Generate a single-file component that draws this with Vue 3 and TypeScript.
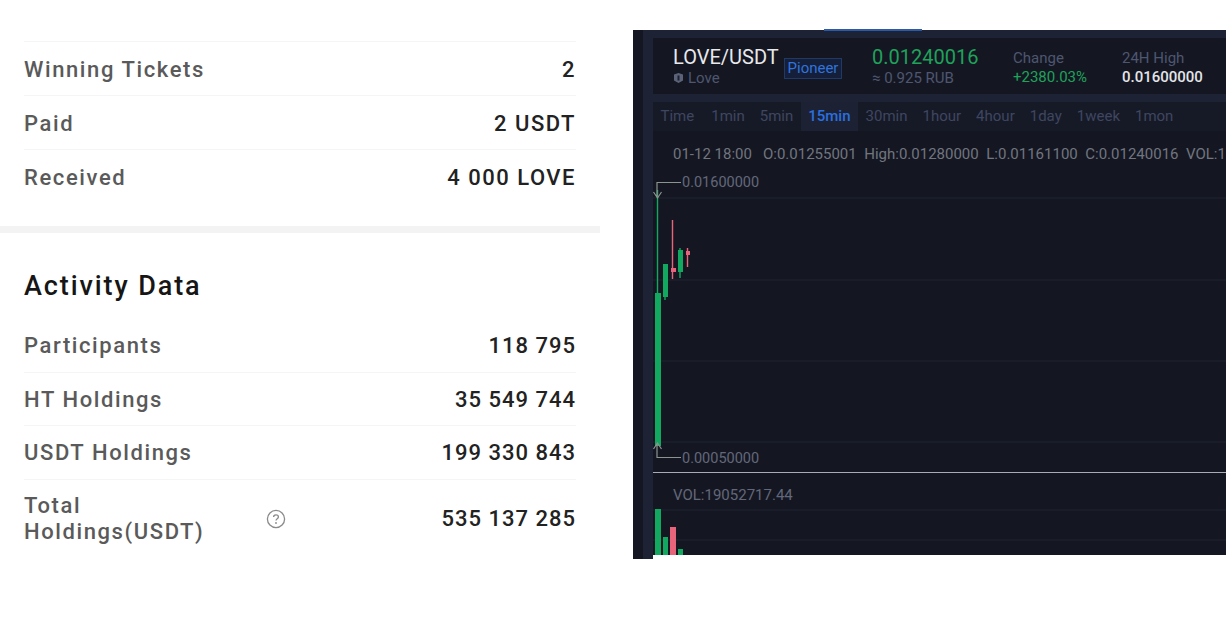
<script setup lang="ts">
interface Row {
  label: string;
  value: string;
}

interface Candle {
  x: number;
  width: number;
  top: number;
  bottom: number;
  wickX: number;
  wickTop: number;
  wickBottom: number;
  color: string;
}

const green = '#12a85f';
const red = '#e8647a';

const ticketRows: Row[] = [
  { label: 'Winning Tickets', value: '2' },
  { label: 'Paid', value: '2 USDT' },
  { label: 'Received', value: '4 000 LOVE' },
];

const activityRows: Row[] = [
  { label: 'Participants', value: '118 795' },
  { label: 'HT Holdings', value: '35 549 744' },
  { label: 'USDT Holdings', value: '199 330 843' },
];

const periods = ['Time', '1min', '5min', '15min', '30min', '1hour', '4hour', '1day', '1week', '1mon'];
const ohlc = ['01-12 18:00', 'O:0.01255001', 'High:0.01280000', 'L:0.01161100', 'C:0.01240016', 'VOL:19052717.44'];
const gridLines = [198, 280, 361, 442, 510, 540];

const candles: Candle[] = [
  { x: 655, width: 6, top: 293, bottom: 446, wickX: 657.5, wickTop: 190, wickBottom: 446, color: green },
  { x: 663, width: 5, top: 264, bottom: 297, wickX: 665, wickTop: 264, wickBottom: 300, color: green },
  { x: 671, width: 5, top: 268, bottom: 272, wickX: 672.5, wickTop: 220, wickBottom: 279, color: red },
  { x: 678, width: 5, top: 250, bottom: 272, wickX: 680, wickTop: 248, wickBottom: 278, color: green },
  { x: 686, width: 4, top: 251, bottom: 255, wickX: 687.5, wickTop: 248, wickBottom: 267, color: red },
];

const volumes = [
  { x: 655, width: 6, top: 509, color: green },
  { x: 663, width: 5, top: 537, color: green },
  { x: 670, width: 6, top: 527, color: red },
  { x: 678, width: 5, top: 549, color: green },
];
</script>

<template>
  <div class="page">
    <section class="details">
      <div class="rows tickets">
        <div v-for="row in ticketRows" :key="row.label" class="row">
          <span class="label">{{ row.label }}</span>
          <span class="value">{{ row.value }}</span>
        </div>
      </div>
      <div class="divider"></div>
      <h2 class="title">Activity Data</h2>
      <div class="rows activity">
        <div v-for="row in activityRows" :key="row.label" class="row">
          <span class="label">{{ row.label }}</span>
          <span class="value">{{ row.value }}</span>
        </div>
        <div class="row total">
          <span class="label total-label">Total Holdings(USDT)</span>
          <svg class="help" width="20" height="20" viewBox="0 0 20 20" fill="none">
            <circle cx="10" cy="10" r="8.6" stroke="#8a8a8a" stroke-width="1.3" />
            <path d="M7.6 8c0-1.4 1-2.2 2.4-2.2s2.4.9 2.4 2.1c0 1.8-2.4 1.8-2.4 3.7" stroke="#8a8a8a" stroke-width="1.3" />
            <circle cx="10" cy="14" r=".9" fill="#8a8a8a" />
          </svg>
          <span class="value">535 137 285</span>
        </div>
      </div>
    </section>

    <section class="terminal">
      <div class="top-mark"></div>
      <div class="terminal-body">
        <div class="rail"></div>
        <div class="main">
          <header class="ticker">
            <div class="pair">
              <div class="pair-name">LOVE/USDT</div>
              <div class="pair-sub">
                <svg width="11" height="12" viewBox="0 0 11 12">
                  <path d="M1 2.5 5.5 1 10 2.5v6L5.5 11 1 8.500z" fill="#5c6378" />
                  <path d="M4.500 3.500h2v5h-2z" fill="#1c2030" />
                </svg>
                <span>Love</span>
              </div>
            </div>
            <span class="badge">Pioneer</span>
            <div class="price">
              <div class="price-main">0.01240016</div>
              <div class="muted">≈ 0.925 RUB</div>
            </div>
            <div class="stat change">
              <div class="muted">Change</div>
              <div class="up">+2380.03%</div>
            </div>
            <div class="stat high">
              <div class="muted">24H High</div>
              <div class="bright">0.01600000</div>
            </div>
          </header>
          <div class="band"></div>
          <nav class="periods">
            <span v-for="period in periods" :key="period" class="period" :class="{ active: period === '15min' }">
              {{ period }}
            </span>
          </nav>
          <div class="ohlc">
            <span v-for="item in ohlc" :key="item">{{ item }}</span>
          </div>
          <svg class="chart" viewBox="653 167 573 392" width="573" height="392">
            <line v-for="y in gridLines" :key="y" x1="653" x2="1226" :y1="y" :y2="y" stroke="#1e2230" />
            <line x1="653" x2="1226" y1="472.500" y2="472.500" stroke="#a9acb4" />

            <g v-for="candle in candles" :key="candle.x">
              <line :x1="candle.wickX" :x2="candle.wickX" :y1="candle.wickTop" :y2="candle.wickBottom" :stroke="candle.color" stroke-width="1.4" />
              <rect :x="candle.x" :y="candle.top" :width="candle.width" :height="candle.bottom - candle.top" :fill="candle.color" />
            </g>
            <rect
              v-for="bar in volumes"
              :key="bar.x"
              :x="bar.x"
              :y="bar.top"
              :width="bar.width"
              :height="559 - bar.top"
              :fill="bar.color"
            />

            <path d="M681 182.500h-24v14M653.500 192l4 6 4-6" fill="none" stroke="#8b948f" stroke-width="1.2" />
            <path d="M681 457.500h-24v-14M653.500 449l4-6 4 6" fill="none" stroke="#8b948f" stroke-width="1.2" />
            <text x="682" y="187" class="chart-label">0.01600000</text>
            <text x="682" y="463" class="chart-label">0.00050000</text>
            <text x="673" y="500" class="chart-label vol">VOL:19052717.44</text>
          </svg>
        </div>
      </div>
    </section>
  </div>
</template>

<style scoped>
.page {
  display: flex;
  align-items: flex-start;
  height: 629px;
  overflow: hidden;
  background: #fff;
}

.details {
  flex: 0 0 600px;
  padding-top: 41px;
  font-family: Roboto, "Liberation Sans", sans-serif;
}

.rows {
  margin: 0 24px;
}

.row {
  display: flex;
  align-items: center;
  justify-content: space-between;
  height: 54px;
  box-sizing: border-box;
  padding-top: 1px;
  border-top: 1px solid #f5f5f5;
}

.label {
  font-size: 22px;
  font-weight: 500;
  letter-spacing: 1.6px;
  color: #5a5a5a;
}

.value {
  font-size: 22px;
  font-weight: 500;
  letter-spacing: 1px;
  color: #222;
}

.tickets .value {
  letter-spacing: 1.5px;
}

.divider {
  height: 7px;
  margin-top: 23px;
  background: #f3f3f3;
}

.title {
  margin: 36px 24px 0;
  font-size: 27px;
  line-height: 34px;
  font-weight: 500;
  letter-spacing: 1.9px;
  color: #161616;
}

.activity {
  margin-top: 15px;
}

.activity .row {
  height: 53.500px;
  padding-top: 1px;
}

.activity .row:first-child {
  border-top: 0;
}

.activity .total {
  height: 79px;
  padding-top: 0;
}

.total-label {
  width: 230px;
  line-height: 26px;
}

.help {
  margin-right: auto;
  margin-left: 12px;
}

.terminal {
  flex: 1;
  height: 529px;
  margin: 30px 0 0 33px;
  position: relative;
  font-family: Roboto, "Liberation Sans", sans-serif;
}

.top-mark {
  position: absolute;
  top: -1px;
  left: 191px;
  width: 98px;
  height: 2px;
  background: #2a5aa8;
}

.terminal-body {
  display: flex;
  align-items: flex-start;
  height: 100%;
}

.rail {
  flex: 0 0 20px;
  height: 100%;
  box-sizing: border-box;
  background: #1d2235;
  border-left: 10px solid #141722;
}

.main {
  flex: 1;
  min-width: 0;
  height: 525px;
  box-sizing: border-box;
  padding-top: 8px;
  background: linear-gradient(#1d2235 8px, #141722 8px);
  overflow: hidden;
}

.ticker {
  display: flex;
  align-items: center;
  height: 56px;
  padding-left: 20px;
  white-space: nowrap;
}

.pair {
  width: 111px;
}

.pair-name {
  font-size: 20px;
  line-height: 24px;
  color: #e8e9ec;
}

.pair-sub {
  display: flex;
  align-items: center;
  gap: 4px;
  font-size: 15px;
  line-height: 18px;
  color: #4e5670;
}

.badge {
  box-sizing: border-box;
  width: 58px;
  height: 21px;
  margin-top: 5px;
  border: 1px solid #1f3a66;
  background: #151f3a;
  font-size: 15px;
  line-height: 19px;
  text-align: center;
  color: #2f74dc;
}

.price {
  margin-left: 30px;
  width: 141px;
}

.price-main {
  font-size: 20px;
  line-height: 24px;
  color: #1fa25a;
}

.muted {
  font-size: 15px;
  line-height: 18px;
  color: #4e5670;
}

.stat {
  width: 109px;
  padding-top: 4px;
}

.up {
  font-size: 15px;
  line-height: 20px;
  color: #1fa25a;
}

.bright {
  font-size: 15px;
  line-height: 20px;
  font-weight: 500;
  color: #e4e5e9;
}

.band {
  height: 8px;
  background: #1d2235;
}

.periods {
  display: flex;
  height: 29px;
  background: #161a27;
  box-sizing: border-box;
  white-space: nowrap;
}

.period {
  padding: 0 7.500px;
  font-size: 15px;
  line-height: 29px;
  color: #3f4660;
}

.period:first-child {
  margin-right: 2px;
}

.period.active {
  font-weight: 500;
  color: #2a6fe0;
  background: #1c2233;
}

.ohlc {
  display: flex;
  gap: 7.500px;
  height: 36px;
  padding-left: 20px;
  font-size: 15px;
  line-height: 46px;
  white-space: nowrap;
  color: #71757f;
}

.ohlc span:first-child {
  margin-right: 3.500px;
}

.chart {
  display: block;
  overflow: hidden;
}

.chart-label {
  font-family: Roboto, "Liberation Sans", sans-serif;
  font-size: 14.500px;
  fill: #63677a;
}

.chart-label.vol {
  font-size: 15px;
}
</style>
